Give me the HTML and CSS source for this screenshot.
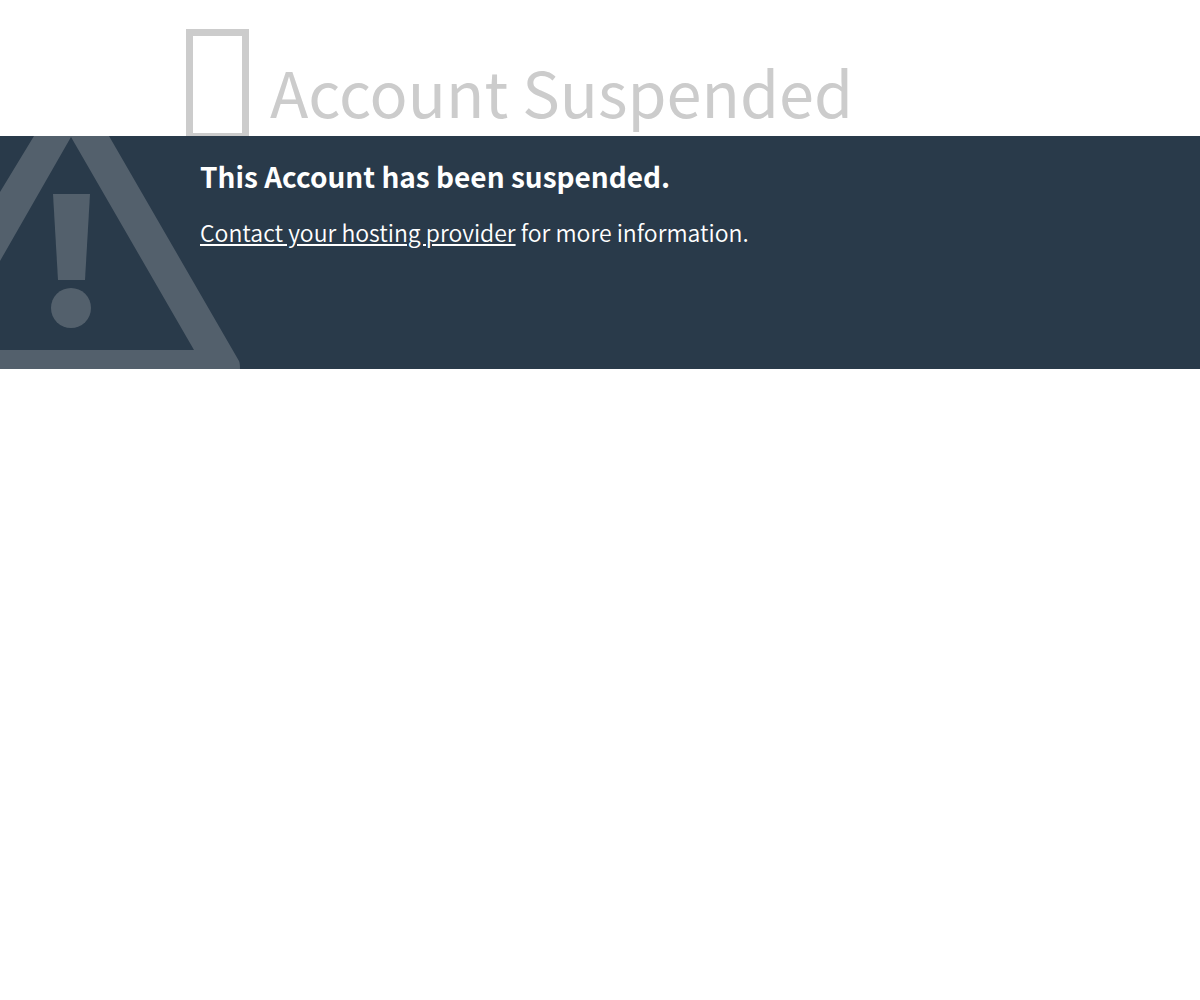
FILE: index.html
```html
<!DOCTYPE html>
<html lang="en">
<head>
    <meta charset="UTF-8">
    <meta name="viewport" content="width=device-width, initial-scale=1.0">
    <title>Account Suspended</title>
    <link rel="stylesheet" href="styles.css">
</head>
<body>
    <header class="status">
        <span class="status-icon"></span>
        <h1 class="status-reason">Account Suspended</h1>
    </header>

    <main class="additional-info">
        <svg class="warning" viewBox="0 0 240 233" aria-hidden="true">
            <path d="M34 0H109L239 225Q240 227 240 233H0V214H194L71 1L0 125V56Z"/>
            <path d="M53 58H90L85 144H58Z"/>
            <circle cx="71" cy="172" r="20"/>
        </svg>
        <div class="info-text">
            <h2>This Account has been suspended.</h2>
            <p><a href="#">Contact your hosting provider</a> for more information.</p>
        </div>
    </main>
</body>
</html>
```
FILE: styles.css
```css
body {
    margin: 0;
    font-family: "Noto Sans CJK JP", "Noto Sans", sans-serif;
    background-color: #fff;
    color: #ccc;
}
.status {
    display: flex;
    align-items: flex-end;
    gap: 21px;
    padding: 29px 20px 0 186px;
}
.status-icon {
    box-sizing: border-box;
    width: 63px;
    height: 107px;
    border: 7px solid #ccc;
    border-bottom-width: 3px;
}
.status-reason {
    margin: 0;
    font-size: 63px;
    font-weight: 400;
    line-height: 90px;
}
.additional-info {
    position: relative;
    box-sizing: border-box;
    min-height: 233px;
    padding: 20px 20px 20px 200px;
    background-color: #293a4a;
    color: #fff;
}
.warning {
    position: absolute;
    top: 0;
    left: 0;
    width: 240px;
    height: 233px;
    fill: #53606c;
}
.info-text {
    position: relative;
}
.info-text h2 {
    margin: 0 0 20px;
    font-size: 28px;
    font-weight: 700;
    line-height: 40px;
}
.info-text p {
    margin: 0;
    font-size: 23px;
    font-weight: 350;
    line-height: 32px;
}
.info-text a {
    color: #fff;
}
```
